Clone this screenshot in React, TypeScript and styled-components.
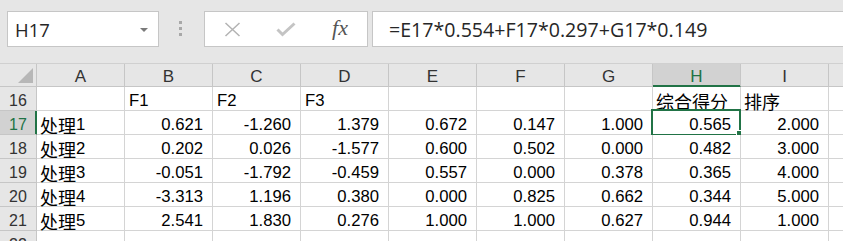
import React from 'react';
import styled, { createGlobalStyle } from 'styled-components';

const Global = createGlobalStyle`
  html, body { margin: 0; padding: 0; background: #e6e6e6; overflow: hidden; }
  #root { width: 843px; height: 241px; }
`;

const Page = styled.div`
  width: 843px;
  height: 241px;
  overflow: hidden;
  background: #e6e6e6;
  display: flex;
  flex-direction: column;
`;

const Toolbar = styled.div`
  flex: none;
  height: 63px;
  box-sizing: border-box;
  padding: 11px 0 0 7px;
  display: flex;
  align-items: flex-start;
`;

const NameBox = styled.div`
  flex: none;
  width: 152px;
  height: 36px;
  box-sizing: border-box;
  border: 1px solid #c6c6c6;
  background: #fff;
  display: flex;
  align-items: center;
  justify-content: space-between;
  padding: 0 10px 0 7px;
  font-family: "Open Sans", "Liberation Sans", sans-serif;
  font-size: 18.5px;
  color: #262626;
`;

const DropArrow = styled.span`
  width: 0;
  height: 0;
  border-left: 4px solid transparent;
  border-right: 4px solid transparent;
  border-top: 4px solid #7a7a7a;
  margin-top: 1px;
`;

const Grip = styled.div`
  flex: none;
  margin: 10px 0 0 20px;
  display: flex;
  flex-direction: column;
  gap: 3px;
`;

const GripDot = styled.span`
  width: 3px;
  height: 3px;
  background: #a8a8a8;
`;

const FxGroup = styled.div`
  flex: none;
  margin-left: 22px;
  width: 164px;
  height: 36px;
  box-sizing: border-box;
  border: 1px solid #c6c6c6;
  background: #fff;
  display: flex;
  align-items: center;
`;

const IconSlot = styled.div`
  width: 54px;
  height: 100%;
  display: flex;
  align-items: center;
  justify-content: center;
`;

const FxText = styled.span`
  font-family: "Liberation Serif", "DejaVu Serif", serif;
  font-style: italic;
  font-size: 22px;
  color: #555;
  margin-top: -2px;
`;

const FormulaBox = styled.div`
  flex: 1;
  margin: 0 -6px 0 4px;
  height: 36px;
  box-sizing: border-box;
  border: 1px solid #c6c6c6;
  background: #fff;
  display: flex;
  align-items: center;
  padding-left: 16px;
  font-family: "Open Sans", "Liberation Sans", sans-serif;
  font-size: 19.6px;
  color: #262626;
  white-space: nowrap;
`;

const Sheet = styled.div`
  flex: none;
  display: grid;
  grid-template-columns: 37px repeat(9, 88px) 88px;
  grid-auto-rows: 24px;
  grid-template-rows: 23px;
  border-top: 1px solid #d0d0d0;
  font-family: "Liberation Sans", Arial, "Noto Sans CJK SC", sans-serif;
  font-size: 16.7px;
  line-height: 18px;
`;

const Corner = styled.div`
  position: relative;
  box-sizing: border-box;
  background: #e6e6e6;
  border-right: 1px solid #c6c6c6;
  border-bottom: 1px solid #c6c6c6;
`;

const CornerTriangle = styled.span`
  position: absolute;
  right: 3px;
  bottom: 3px;
  width: 0;
  height: 0;
  border-left: 15px solid transparent;
  border-bottom: 15px solid #b7b7b7;
`;

const ColHeader = styled.div<{ $selected?: boolean }>`
  box-sizing: border-box;
  display: flex;
  align-items: flex-end;
  justify-content: center;
  font-size: 17px;
  background: ${p => (p.$selected ? '#d2d2d2' : '#e6e6e6')};
  color: ${p => (p.$selected ? '#217346' : '#333')};
  border-right: 1px solid #c6c6c6;
  border-bottom: 1px solid ${p => (p.$selected ? '#217346' : '#c6c6c6')};
  box-shadow: ${p => (p.$selected ? 'inset 0 -1px 0 #217346' : 'none')};
`;

const RowHeader = styled.div<{ $selected?: boolean }>`
  box-sizing: border-box;
  display: flex;
  align-items: flex-end;
  justify-content: center;
  font-size: 16px;
  background: ${p => (p.$selected ? '#d2d2d2' : '#e6e6e6')};
  color: ${p => (p.$selected ? '#217346' : '#333')};
  border-right: 1px solid ${p => (p.$selected ? '#217346' : '#c6c6c6')};
  border-bottom: 1px solid #c6c6c6;
  box-shadow: ${p => (p.$selected ? 'inset -1px 0 0 #217346' : 'none')};
`;

const Cell = styled.div<{ $align: 'left' | 'right' }>`
  position: relative;
  box-sizing: border-box;
  display: flex;
  align-items: flex-end;
  justify-content: ${p => (p.$align === 'right' ? 'flex-end' : 'flex-start')};
  padding: ${p => (p.$align === 'right' ? '0 9px 0 0' : '0 0 0 4px')};
  background: #fff;
  color: #000;
  white-space: nowrap;
  border-right: 1px solid #d4d4d4;
  border-bottom: 1px solid #d4d4d4;
`;

const Cjk = styled.span`
  font-family: "Noto Sans CJK SC", sans-serif;
  font-size: 18px;
  line-height: 18px;
  margin-left: -1px;
`;

const Latin = styled.span`
  font-family: "Liberation Sans", Arial, sans-serif;
`;

const Selection = styled.span`
  position: absolute;
  left: -2px;
  top: -2px;
  right: -1px;
  bottom: -2px;
  border: 2px solid #217346;
  pointer-events: none;
`;

const FillHandle = styled.span`
  position: absolute;
  left: 84px;
  top: 20px;
  width: 6px;
  height: 6px;
  background: #217346;
  box-shadow: -1px -1px 0 #fff;
`;

const COLS = ['A', 'B', 'C', 'D', 'E', 'F', 'G', 'H', 'I', 'J'];

const ROWS: { n: number; cells: string[] }[] = [
  { n: 16, cells: ['', 'F1', 'F2', 'F3', '', '', '', '综合得分', '排序', ''] },
  { n: 17, cells: ['处理1', '0.621', '-1.260', '1.379', '0.672', '0.147', '1.000', '0.565', '2.000', ''] },
  { n: 18, cells: ['处理2', '0.202', '0.026', '-1.577', '0.600', '0.502', '0.000', '0.482', '3.000', ''] },
  { n: 19, cells: ['处理3', '-0.051', '-1.792', '-0.459', '0.557', '0.000', '0.378', '0.365', '4.000', ''] },
  { n: 20, cells: ['处理4', '-3.313', '1.196', '0.380', '0.000', '0.825', '0.662', '0.344', '5.000', ''] },
  { n: 21, cells: ['处理5', '2.541', '1.830', '0.276', '1.000', '1.000', '0.627', '0.944', '1.000', ''] },
  { n: 22, cells: ['', '', '', '', '', '', '', '', '', ''] },
];

const isNumber = (s: string) => /^-?\d+(\.\d+)?$/.test(s);

function renderText(s: string) {
  const parts = s.match(/[\u4e00-\u9fff]+|[^\u4e00-\u9fff]+/g) || [];
  return parts.map((p, i) =>
    /[\u4e00-\u9fff]/.test(p) ? <Cjk key={i}>{p}</Cjk> : <Latin key={i}>{p}</Latin>
  );
}

export default function App() {
  return (
    <>
      <Global />
      <Page>
        <Toolbar>
          <NameBox>
            <span>H17</span>
            <DropArrow />
          </NameBox>
          <Grip>
            <GripDot />
            <GripDot />
            <GripDot />
          </Grip>
          <FxGroup>
            <IconSlot>
              <svg width="17" height="15" viewBox="0 0 17 15">
                <path d="M1.5 1 L15.5 14 M15.5 1 L1.5 14" stroke="#b3b3b3" strokeWidth="1.5" fill="none" />
              </svg>
            </IconSlot>
            <IconSlot>
              <svg width="20" height="15" viewBox="0 0 20 15">
                <path d="M1.5 7.5 L6.5 12.5 L18.5 1.5" stroke="#c4c4c4" strokeWidth="3" fill="none" />
              </svg>
            </IconSlot>
            <IconSlot>
              <FxText>fx</FxText>
            </IconSlot>
          </FxGroup>
          <FormulaBox>=E17*0.554+F17*0.297+G17*0.149</FormulaBox>
        </Toolbar>
        <Sheet>
          <Corner>
            <CornerTriangle />
          </Corner>
          {COLS.map(c => (
            <ColHeader key={c} $selected={c === 'H'}>
              {c}
            </ColHeader>
          ))}
          {ROWS.map(r => (
            <React.Fragment key={r.n}>
              <RowHeader $selected={r.n === 17}>{r.n}</RowHeader>
              {r.cells.map((v, i) => {
                const sel = r.n === 17 && i === 7;
                return (
                  <Cell key={i} $align={isNumber(v) ? 'right' : 'left'}>
                    {renderText(v)}
                    {sel && <Selection />}
                    {sel && <FillHandle />}
                  </Cell>
                );
              })}
            </React.Fragment>
          ))}
        </Sheet>
      </Page>
    </>
  );
}
